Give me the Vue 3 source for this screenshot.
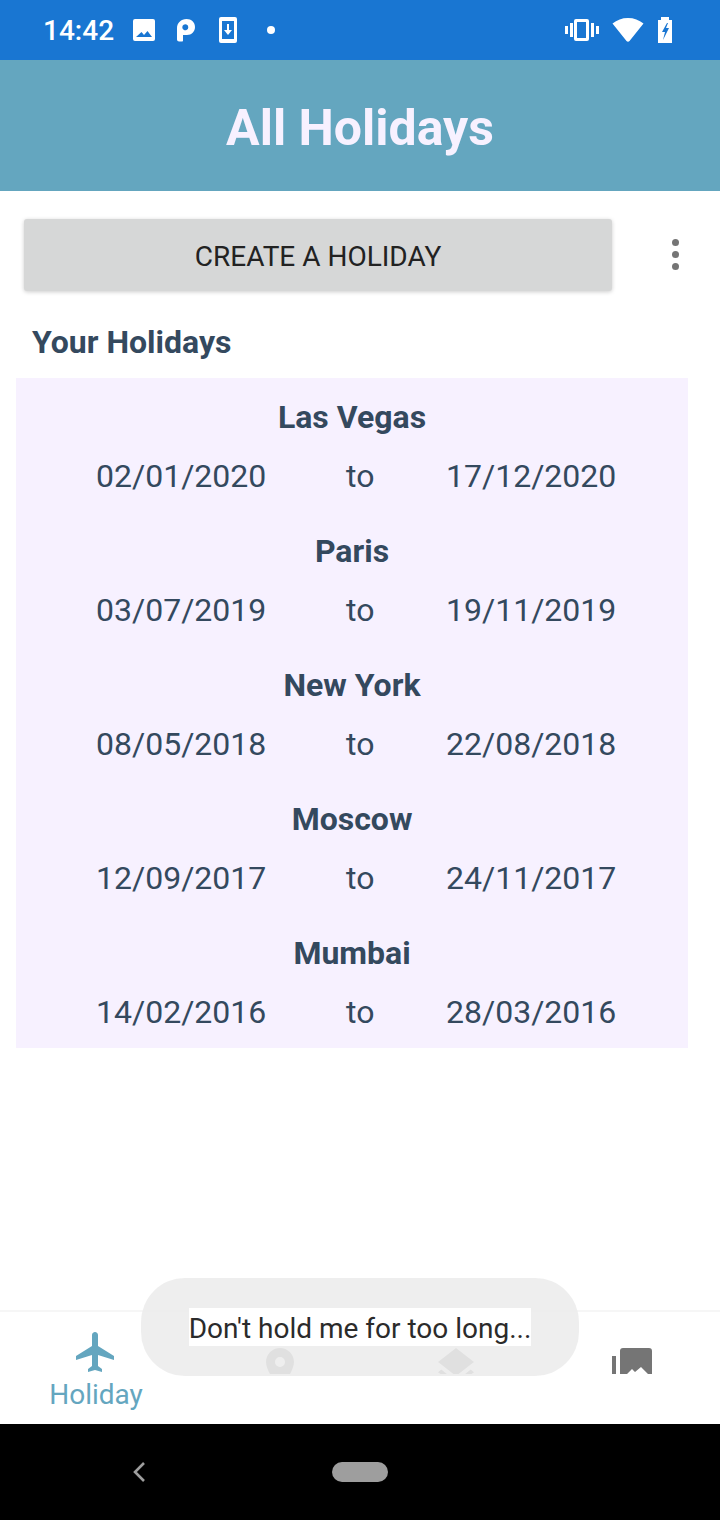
<template>
  <div class="screen">
    <div class="status-bar">
      <span class="time">14:42</span>
      <svg class="st-image" width="26" height="26" viewBox="0 0 26 26">
        <path fill="#fff" d="M4 2h18a2 2 0 0 1 2 2v18a2 2 0 0 1-2 2H4a2 2 0 0 1-2-2V4a2 2 0 0 1 2-2zm1 18h16l-4.500-6-3.500 4-2.500-3z" fill-rule="evenodd" />
      </svg>
      <svg class="st-p" width="20" height="24" viewBox="0 0 20 24">
        <path fill="#fff" fill-rule="evenodd" d="M10.500 1C15.500 1 19 4.500 19 9s-3.500 8-8 8H7v5.500c0 .6-.4 1-1 1H3c-1 0-2-1-2-2V10C1 5 5 1 10.500 1zM10.500 6.500a3 3 0 1 0 0 5.500 3 3 0 0 0 0-5.500z" />
      </svg>
      <svg class="st-dl" width="18" height="26" viewBox="0 0 18 26">
        <path fill="#fff" fill-rule="evenodd" d="M2 0h14a2 2 0 0 1 2 2v22a2 2 0 0 1-2 2H2a2 2 0 0 1-2-2V2a2 2 0 0 1 2-2zm1 4v18h12V4zm5 3h2v6h3l-4 5-4-5h3z" />
      </svg>
      <span class="st-dot"></span>
      <span class="spacer"></span>
      <svg class="st-vib" width="34" height="26" viewBox="0 0 34 26">
        <path fill="#fff" fill-rule="evenodd" d="M11 2h11a2 2 0 0 1 2 2v18a2 2 0 0 1-2 2H11a2 2 0 0 1-2-2V4a2 2 0 0 1 2-2zm1 3v16h9V5zM0 9h3v8H0zM5 6h3v14H5zM26 6h3v14h-3zM31 9h3v8h-3z" />
      </svg>
      <svg class="st-wifi" width="32" height="26" viewBox="0 0 32 26">
        <path fill="#fff" d="M16 1C10 1 5 3 0.500 6.500L14.500 24c.8 1 2.200 1 3 0L31.500 6.500C27 3 22 1 16 1z" />
      </svg>
      <svg class="st-bat" width="14" height="26" viewBox="0 0 14 26">
        <path fill="#fff" fill-rule="evenodd" d="M3 0h8v3h3v23H0V3h3zM9 6L4 15h3L5 23l6-12H8l2-5z" />
      </svg>
    </div>

    <header class="app-header">All Holidays</header>

    <main class="content">
      <div class="action-row">
        <button class="create-btn">CREATE A HOLIDAY</button>
        <div class="kebab"><i></i><i></i><i></i></div>
      </div>

      <h2 class="section-title">Your Holidays</h2>

      <section class="holiday-list">
        <div v-for="h in holidays" :key="h.city" class="holiday">
          <div class="city">{{ h.city }}</div>
          <div class="dates">
            <span>{{ h.from }}</span>
            <span>to</span>
            <span>{{ h.until }}</span>
          </div>
        </div>
      </section>
    </main>

    <nav class="bottom-nav">
      <div class="nav-item active">
        <svg class="nav-icon" width="48" height="48" viewBox="0 0 24 24">
          <path fill="#64a6bf" d="M21 16v-2l-8-5V3.500c0-.83-.67-1.500-1.500-1.500S10 2.670 10 3.500V9l-8 5v2l8-2.500V19l-2 1.500V22l3.500-1 3.500 1v-1.500L13 19v-5.500l8 2.500z" />
        </svg>
        <span class="nav-label">Holiday</span>
      </div>
      <div class="nav-item">
        <div class="icon-clip">
          <svg width="48" height="48" viewBox="0 0 24 24">
            <path fill="#757575" d="M12 2C8.130 2 5 5.130 5 9c0 5.250 7 13 7 13s7-7.750 7-13c0-3.870-3.130-7-7-7zm0 9.500a2.500 2.500 0 0 1 0-5 2.500 2.500 0 0 1 0 5z" />
          </svg>
        </div>
      </div>
      <div class="nav-item">
        <div class="icon-clip">
          <svg width="48" height="48" viewBox="0 0 24 24">
            <path fill="#757575" d="M11.990 18.540l-7.370-5.730L3 14.070l9 7 9-7-1.630-1.270-7.380 5.740zM12 16l7.360-5.730L21 9l-9-7-9 7 1.630 1.270L12 16z" />
          </svg>
        </div>
      </div>
      <div class="nav-item">
        <div class="icon-clip">
          <svg width="48" height="48" viewBox="0 0 48 48">
            <path fill="#757575" d="M4 12h4v34H4zM15 4h26a3 3 0 0 1 3 3v39H12V7a3 3 0 0 1 3-3z" />
            <path fill="#fff" d="M19 30l5-5 3 3 6-5 7 7z" />
          </svg>
        </div>
      </div>
    </nav>

    <div class="system-nav">
      <svg width="20" height="24" viewBox="0 0 20 24" class="back">
        <path d="M15 3L6 12l9 9" fill="none" stroke="#9e9e9e" stroke-width="2.600" />
      </svg>
      <span class="home-pill"></span>
    </div>

    <div class="toast"><span>Don't hold me for too long...</span></div>
  </div>
</template>

<script setup>
const holidays = [
  { city: 'Las Vegas', from: '02/01/2020', until: '17/12/2020' },
  { city: 'Paris', from: '03/07/2019', until: '19/11/2019' },
  { city: 'New York', from: '08/05/2018', until: '22/08/2018' },
  { city: 'Moscow', from: '12/09/2017', until: '24/11/2017' },
  { city: 'Mumbai', from: '14/02/2016', until: '28/03/2016' },
];
</script>

<style>
body {
  margin: 0;
}
</style>

<style scoped>
.screen {
  position: relative;
  width: 720px;
  height: 1520px;
  display: flex;
  flex-direction: column;
  overflow: hidden;
  background: #fff;
  font-family: Roboto, "Liberation Sans", sans-serif;
}

.status-bar {
  height: 60px;
  flex: none;
  display: flex;
  align-items: center;
  padding-left: 43px;
  background: #1976d2;
  color: #fff;
}
.time {
  font-size: 28px;
  font-weight: 500;
  width: 88px;
}
.st-p {
  margin-left: 19px;
}
.st-dl {
  margin-left: 23px;
}
.st-dot {
  width: 8px;
  height: 8px;
  border-radius: 50%;
  background: #fff;
  margin-left: 30px;
}
.spacer {
  flex: 1;
}
.st-wifi {
  margin-left: 13px;
}
.st-bat {
  margin-left: 14px;
  margin-right: 48px;
}

.app-header {
  height: 131px;
  flex: none;
  display: flex;
  align-items: center;
  justify-content: center;
  padding-top: 4px;
  box-sizing: border-box;
  background: #64a6bf;
  color: #f7f1ff;
  font-size: 50px;
  font-weight: 700;
}

.content {
  flex: 1;
}
.action-row {
  display: flex;
  align-items: center;
  margin-top: 28px;
  padding-left: 24px;
}
.create-btn {
  width: 588px;
  height: 72px;
  padding: 3px 0 0;
  border: none;
  border-radius: 3px;
  background: #d6d7d7;
  color: #222;
  font-family: inherit;
  font-size: 28px;
  box-shadow: 0 1px 4px rgba(0, 0, 0, 0.2);
}
.kebab {
  display: flex;
  flex-direction: column;
  gap: 5px;
  margin-left: 60px;
  margin-top: -1px;
}
.kebab i {
  width: 7px;
  height: 7px;
  border-radius: 50%;
  background: #757575;
}
.section-title {
  margin: 31px 0 16px 32px;
  height: 40px;
  line-height: 40px;
  color: #34495e;
  font-size: 32px;
  font-weight: 700;
}
.holiday-list {
  width: 672px;
  box-sizing: border-box;
  margin-left: 16px;
  padding: 19px 0 17px;
  display: flex;
  flex-direction: column;
  gap: 36px;
  background: #f7f1ff;
  color: #34495e;
}
.city {
  height: 40px;
  line-height: 40px;
  margin-bottom: 20px;
  text-align: center;
  font-size: 32px;
  font-weight: 700;
}
.dates {
  display: grid;
  grid-template-columns: 250px 100px auto;
  padding-left: 80px;
  height: 38px;
  line-height: 38px;
  font-size: 32px;
}

.bottom-nav {
  flex: none;
  display: grid;
  grid-template-columns: 192px 176px 176px 176px;
  border-top: 2px solid #f6f6f6;
  box-sizing: border-box;
  height: 114px;
  background: #fff;
}
.nav-item {
  display: flex;
  flex-direction: column;
  align-items: center;
}
.nav-icon {
  margin-top: 16px;
}
.nav-label {
  font-size: 28px;
  line-height: 32px;
  margin-top: 3px;
  color: #64a6bf;
}
.icon-clip {
  width: 48px;
  height: 30px;
  margin-top: 32px;
  overflow: hidden;
}

.system-nav {
  position: relative;
  height: 96px;
  flex: none;
  display: flex;
  align-items: center;
  justify-content: center;
  background: #000;
}
.back {
  position: absolute;
  left: 129px;
  top: 36px;
}
.home-pill {
  width: 56px;
  height: 20px;
  border-radius: 10px;
  background: #9e9e9e;
}

.toast {
  position: absolute;
  left: 141px;
  top: 1278px;
  width: 438px;
  height: 98px;
  display: flex;
  align-items: center;
  justify-content: center;
  border-radius: 44px;
  background: rgba(236, 236, 236, 0.9);
}
.toast span {
  height: 38px;
  line-height: 42px;
  background: #fff;
  color: #2b2b2b;
  font-size: 28px;
}
</style>
